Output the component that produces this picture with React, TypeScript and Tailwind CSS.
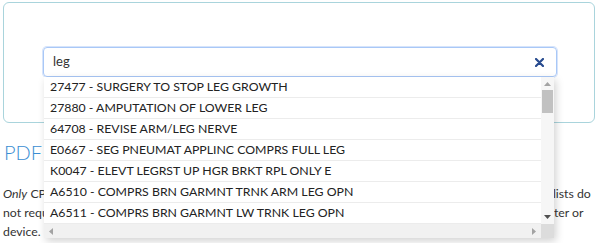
import { useState } from "react";

const results = [
  "27477 - SURGERY TO STOP LEG GROWTH",
  "27880 - AMPUTATION OF LOWER LEG",
  "64708 - REVISE ARM/LEG NERVE",
  "E0667 - SEG PNEUMAT APPLINC COMPRS FULL LEG",
  "K0047 - ELEVT LEGRST UP HGR BRKT RPL ONLY E",
  "A6510 - COMPRS BRN GARMNT TRNK ARM LEG OPN",
  "A6511 - COMPRS BRN GARMNT LW TRNK LEG OPN",
];

export default function App() {
  const [query, setQuery] = useState("leg");

  return (
    <div className="relative h-[243px] w-[598px] overflow-hidden bg-white px-[3px] pt-[2px] font-['Lato',sans-serif] text-[#333]">
      <div className="relative h-[121px] rounded-md border border-[#a9d4dc] px-[39px] pt-[44px]">
        <div className="relative">
          <div className="flex h-[30px] w-[514px] items-center rounded-[4px] border border-[#a9c8f7] pl-[9px] pr-[12px] shadow-[0_0_0_1px_#d6e4fb]">
            <input
              value={query}
              onChange={(e) => setQuery(e.target.value)}
              className="flex-1 bg-transparent text-[13px] text-[#333] outline-none"
            />
            <svg width="9" height="9" viewBox="0 0 9 9" className="text-[#284b8f]">
              <path d="M1 1L8 8M8 1L1 8" stroke="currentColor" strokeWidth="2.2" strokeLinecap="round" />
            </svg>
          </div>

          <div className="absolute left-[1px] top-[30px] z-10 flex h-[161px] w-[510px] flex-col bg-white shadow-[2px_3px_8px_rgba(0,0,0,0.18)]">
            <div className="flex flex-1 overflow-hidden">
              <ul className="flex-1">
                {results.map((r) => (
                  <li
                    key={r}
                    className="flex h-[21px] items-center whitespace-nowrap border-b border-[#ececec] pl-[6px] text-[12.3px] text-[#222]"
                  >
                    {r}
                  </li>
                ))}
              </ul>
              <div className="flex w-[13px] flex-col items-center bg-[#f6f6f6]">
                <svg width="7" height="4" viewBox="0 0 7 4" className="mt-[5px] text-[#a3a3a3]">
                  <path d="M0 4L3.5 0L7 4Z" fill="currentColor" />
                </svg>
                <div className="mt-[4px] h-[23px] w-[11px] bg-[#c1c1c1]" />
                <div className="flex-1" />
                <svg width="7" height="4" viewBox="0 0 7 4" className="mb-[5px] text-[#505050]">
                  <path d="M0 0L3.5 4L7 0Z" fill="currentColor" />
                </svg>
              </div>
            </div>
            <div className="flex h-[14px]">
              <div className="flex flex-1 items-center justify-between bg-[#f1f1f1] px-[5px]">
                <svg width="4" height="7" viewBox="0 0 4 7" className="text-[#a3a3a3]">
                  <path d="M4 0L0 3.5L4 7Z" fill="currentColor" />
                </svg>
                <svg width="4" height="7" viewBox="0 0 4 7" className="text-[#a3a3a3]">
                  <path d="M0 0L4 3.5L0 7Z" fill="currentColor" />
                </svg>
              </div>
              <div className="w-[13px] bg-[#dcdcdc]" />
            </div>
          </div>
        </div>
      </div>

      <h2 className="mt-[17px] pl-[1px] text-[20px] font-light leading-[24px] text-[#3a8ed3]">PDF Lists</h2>
      <div className="mt-[20px] text-[12.3px] leading-[19px] text-[#333]">
        <div className="whitespace-nowrap">
          <em>Only</em> CPT/HCPCS codes that require prior authorization for outpatient care are listed here. These PDF lists do
        </div>
        <div className="whitespace-nowrap">
          not require an internet connection and can be easily downloaded and printed from any desktop computer or
        </div>
        <div className="whitespace-nowrap">device.</div>
      </div>
    </div>
  );
}
